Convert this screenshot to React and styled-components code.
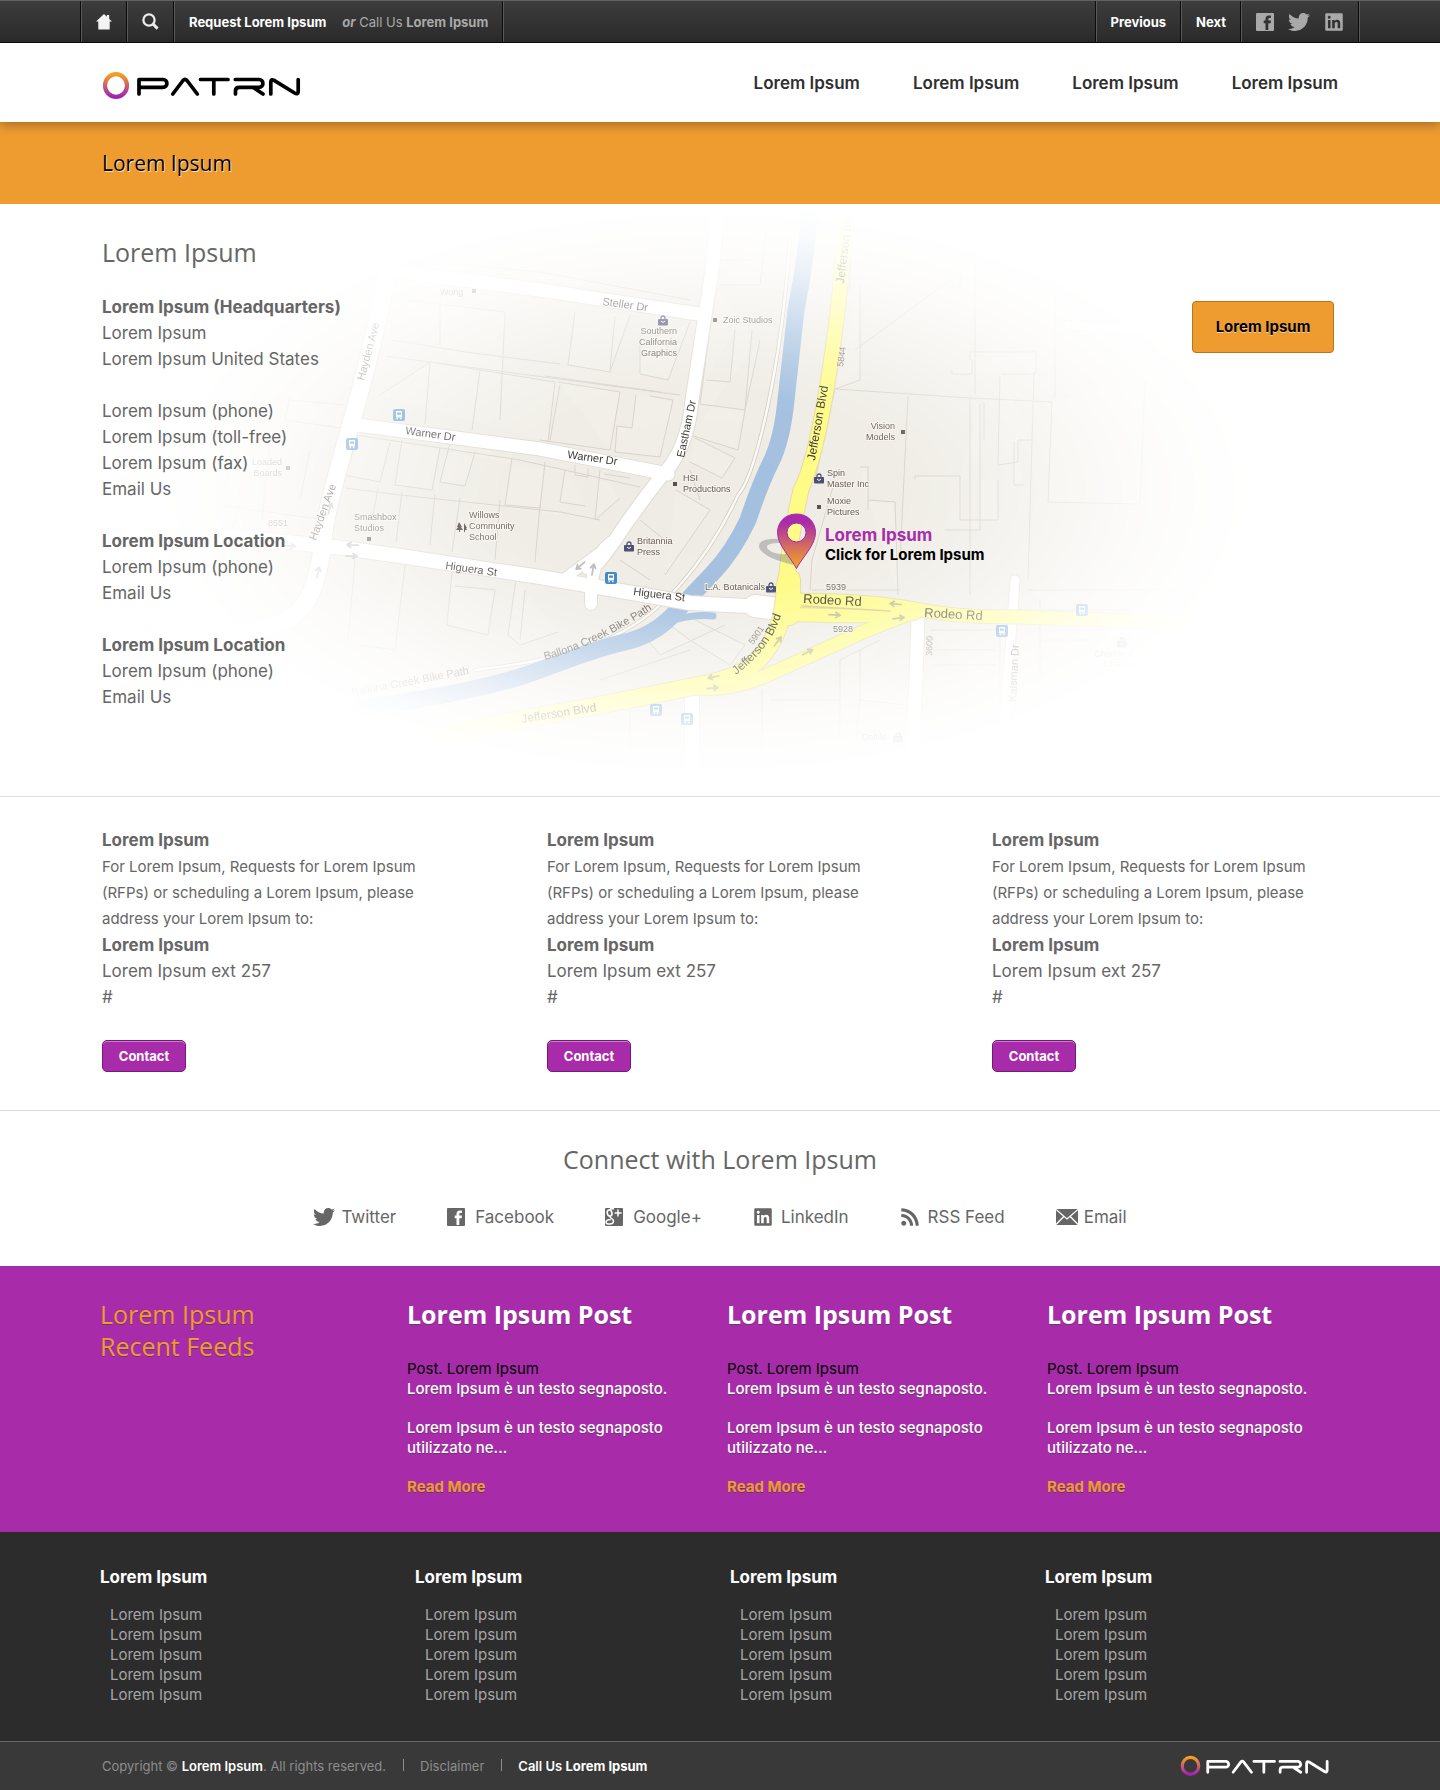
import React from "react";
import styled, { createGlobalStyle } from "styled-components";
import { FaTwitter, FaLinkedin, FaRss } from "react-icons/fa";

const color = {
  orange: "#ee9b30",
  purple: "#a82caa",
  text: "#666666",
  dark: "#2c2c2c",
  line: "#dddddd",
};
const body = '"Inter", "Liberation Sans", sans-serif';
const display = '"Open Sans", "Noto Sans", sans-serif';

const GlobalStyle = createGlobalStyle`
  *, *::before, *::after { box-sizing: border-box; }
  body {
    margin: 0;
    background: #ffffff;
    color: ${color.text};
    font-family: ${body};
    font-size: 17px;
    line-height: 26px;
  }
  a { color: inherit; text-decoration: none; }
  h1, h2, h3, p, ul, address { margin: 0; padding: 0; font-style: normal; }
  ul { list-style: none; }
`;

const Wrap = styled.div`
  width: 100%;
  max-width: 1280px;
  margin: 0 auto;
  padding: 0 ${(p) => (p.$flush ? 0 : 22)}px;
`;

/* ---------- Top bar ---------- */
const TopBar = styled.div`
  height: 43px;
  border-top: 1px solid #626262;
  border-bottom: 1px solid #0c0c0c;
  background: linear-gradient(#3c3c3c, #2b2b2b);
  color: #ffffff;
  font-size: 13px;
  line-height: 18px;
`;
const TopRow = styled(Wrap)`
  display: flex;
  justify-content: space-between;
  height: 100%;
`;
const CellGroup = styled.div`
  display: flex;
  border-left: 1px solid #0c0c0c;
  border-right: 1px solid #5a5a5a;
`;
const Cell = styled.div`
  display: flex;
  align-items: center;
  gap: ${(p) => p.$gap || 0}px;
  padding: 0 14px;
  border-left: 1px solid #5a5a5a;
  border-right: 1px solid #0c0c0c;
  font-weight: 700;
`;
const IconLink = styled.a`
  display: flex;
  color: ${(p) => p.$color || "inherit"};
`;
const CallUs = styled.span`
  color: #a9a9a9;
  font-weight: 400;
`;

/* ---------- Header ---------- */
const Header = styled.header`
  position: relative;
  background: #ffffff;
  box-shadow: 0 3px 10px rgba(0, 0, 0, 0.3);
`;
const HeaderRow = styled(Wrap)`
  display: flex;
  align-items: center;
  justify-content: space-between;
  height: 79px;
`;
const LogoLink = styled.a`
  display: flex;
  padding-top: ${(p) => p.$top || 0}px;
  padding-right: ${(p) => p.$right || 0}px;
`;
const Nav = styled.nav`
  display: flex;
  gap: 53px;
  color: #2f2f2f;
  font-weight: 600;
`;

const Banner = styled.div`
  padding: 28px 0;
  background: ${color.orange};
`;
const BannerTitle = styled.h1`
  color: #000000;
  font: 400 21px/26px ${display};
  text-shadow: 1px 1px 0 rgba(255, 255, 255, 0.7);
`;

/* ---------- Map section ---------- */
const Hero = styled.section`
  position: relative;
  overflow: hidden;
  border-bottom: 1px solid ${color.line};
`;
const MapCanvas = styled.div`
  position: absolute;
  top: 0;
  left: 50%;
  width: 1440px;
  height: 592px;
  margin-left: -720px;
`;
const Marker = styled.a`
  position: absolute;
  top: 309px;
  left: 756px;
  display: flex;
  gap: 7px;
`;
const MarkerText = styled.span`
  display: flex;
  flex-direction: column;
  padding-top: 12px;
  color: #000000;
  font-size: 15px;
  font-weight: 700;
  line-height: 20px;
`;
const MarkerTitle = styled.span`
  color: ${color.purple};
  font-size: 17px;
`;
const HeroRow = styled(Wrap)`
  position: relative;
  display: flex;
  justify-content: space-between;
  align-items: flex-start;
  padding-top: 32px;
  padding-bottom: 86px;
  pointer-events: none;
  a, button { pointer-events: auto; }
`;
const Title = styled.h2`
  color: ${(p) => p.$color || color.text};
  font: ${(p) => (p.$bold ? 700 : 400)} 25px/32px ${display};
  text-shadow: ${(p) => (p.$shadow ? "0 1px 0 rgba(60, 60, 60, 0.6)" : "none")};
`;
const Location = styled.address`
  display: flex;
  flex-direction: column;
  align-items: flex-start;
  margin-top: 26px;
`;
const HeroButton = styled.button`
  width: 142px;
  height: 52px;
  margin: 65px 4px 0 0;
  border: 1px solid #bf7317;
  border-radius: 4px;
  background: ${color.orange};
  color: #000000;
  font: 700 15px/20px ${body};
  text-shadow: 0 1px 0 rgba(255, 255, 255, 0.5);
`;

/* ---------- Department contacts ---------- */
const Band = styled.section`
  border-bottom: 1px solid ${color.line};
`;
const ContactGrid = styled(Wrap)`
  display: grid;
  grid-template-columns: repeat(3, minmax(0, 320px));
  column-gap: 125px;
  padding-top: 30px;
  padding-bottom: 38px;
`;
const ContactNote = styled.p`
  margin-top: 1px;
  font-size: 15px;
`;
const ContactButton = styled.button`
  display: block;
  width: 84px;
  height: 32px;
  margin-top: 30px;
  border: 1px solid #78177a;
  border-radius: 5px;
  background: ${color.purple};
  box-shadow: inset 0 1px 0 rgba(255, 255, 255, 0.4);
  color: #ffffff;
  font: 700 13px/18px ${body};
`;

/* ---------- Connect ---------- */
const Connect = styled.section`
  padding: 32px 0 36px;
  text-align: center;
`;
const SocialRow = styled.ul`
  display: flex;
  justify-content: center;
  gap: 51px;
  margin-top: 29px;
`;
const SocialLink = styled.a`
  display: flex;
  align-items: center;
`;
const SocialIcon = styled.span`
  display: flex;
  width: 28px;
`;

/* ---------- Feeds ---------- */
const Feeds = styled.section`
  background: ${color.purple};
`;
const FeedRow = styled(Wrap)`
  display: grid;
  grid-template-columns: 307px 320px 320px minmax(0, 1fr);
  padding: 32px 0 35px 20px;
`;
const FeedText = styled.div`
  padding-top: 29px;
  padding-right: 40px;
  color: #ffffff;
  font-size: 15px;
  font-weight: 500;
  line-height: 20px;
  text-shadow: 0 1px 0 rgba(60, 60, 60, 0.6);
`;
const FeedMeta = styled.p`
  color: #000000;
  font-weight: 400;
  text-shadow: none;
`;
const FeedBody = styled.p`
  margin-bottom: 19px;
`;
const ReadMore = styled.a`
  color: ${color.orange};
  font-weight: 700;
`;

/* ---------- Footer ---------- */
const Footer = styled.footer`
  background: ${color.dark};
`;
const FooterGrid = styled(Wrap)`
  display: grid;
  grid-template-columns: repeat(4, minmax(0, 315px));
  padding: 32px 0 36px 20px;
`;
const FooterTitle = styled.h3`
  color: #ffffff;
  font-size: 17px;
  font-weight: 700;
  line-height: 26px;
`;
const FooterList = styled.ul`
  margin-top: 15px;
  padding-left: 10px;
  color: #a6a6a6;
  font-size: 15px;
  line-height: 20px;
`;
const Legal = styled.div`
  border-top: 1px solid #666666;
  background: #393939;
  color: #8e8e8e;
  font-size: 13px;
  line-height: 18px;
`;
const LegalRow = styled(Wrap)`
  display: flex;
  align-items: center;
  justify-content: space-between;
  height: 48px;
`;
const LegalItems = styled.div`
  display: flex;
  align-items: center;
`;
const LegalItem = styled.span`
  & + & {
    margin-left: 17px;
    padding-left: 17px;
    background: linear-gradient(#8e8e8e, #8e8e8e) 0 2px / 1px 12px no-repeat;
  }
`;
const Bright = styled.span`
  color: #ffffff;
  font-weight: ${(p) => p.$weight || 600};
`;

/* ---------- Drawings ---------- */
function Logo({ width, ink, id }) {
  return (
    <svg width={width} viewBox="102 71 200 29" role="img" aria-label="PATRN">
      <defs>
        <linearGradient id={id} x1="0" y1="0" x2="0" y2="1">
          <stop offset="0" stopColor="#f5a020" />
          <stop offset="1" stopColor="#a321b6" />
        </linearGradient>
      </defs>
      <ellipse cx="116" cy="85.5" rx="11" ry="11.4" fill="none" stroke={`url(#${id})`} strokeWidth="4.2" />
      <g fill="none" stroke={ink} strokeWidth="3.7" strokeLinecap="round" strokeLinejoin="round">
        <path d="M139 94V79.500H163a3.900 3.900 0 0 1 0 7.800H141" />
        <path d="M172.800 94L183 80.500q2-2.400 4 0L197.300 94" />
        <path d="M200.500 79.500H228M213.800 79.500V94" />
        <path d="M235.300 79.500H259a3.900 3.900 0 0 1 0 7.800H239.500q-4 0-4 3.500V94M254 88L263 94" />
        <path d="M270.800 94V82q0-3.500 3.300-1.600L294.600 93q3.600 2 3.600-1.600V79.500" />
      </g>
    </svg>
  );
}

const HomeIcon = () => (
  <svg width="16" height="16" viewBox="0 0 16 16" aria-hidden="true">
    <path d="M8 0L0 7.600h2.300V15.500h11.400V7.600H16L13.200 5V1h-2.300v1.800z" fill="#f4f4f4" />
  </svg>
);
const SearchIcon = () => (
  <svg width="17" height="17" viewBox="0 0 17 17" fill="none" stroke="#ececec" aria-hidden="true">
    <circle cx="7" cy="7" r="5.600" strokeWidth="2.300" />
    <path d="M11 11l4.600 4.600" strokeWidth="3" />
  </svg>
);
const FacebookIcon = ({ hole = "#fff" }) => (
  <svg width="18" height="18" viewBox="0 0 18 18" aria-hidden="true">
    <rect width="18" height="18" rx="1" fill="currentColor" />
    <path d="M9.500 17V10.200H7.700V7.600h1.800V6c0-2.400 1.200-3.600 3.300-3.600h2.100V5h-1.500c-.9 0-1.100.4-1.100 1.200v1.400H15l-.3 2.600h-2.400V17z" fill={hole} />
  </svg>
);
const GoogleIcon = () => (
  <svg width="18" height="18" viewBox="0 0 18 18" aria-hidden="true">
    <rect width="18" height="18" rx="1" fill="currentColor" />
    <g fill="none" stroke="#fff">
      <path d="M13 1.500v7M9.600 5h7" strokeWidth="1.500" />
      <ellipse cx="4.600" cy="5" rx="2.300" ry="3.100" strokeWidth="1.600" transform="rotate(-14 4.600 5)" />
      <path d="M5 .8h4M5.600 8c-2 1.500 2.900 2.600 2.900 5 0 4-7.500 3.800-7.500 1.300 0-2 2.500-2.600 4.700-2.700" strokeWidth="1.500" />
    </g>
  </svg>
);
const EmailIcon = () => (
  <svg width="22" height="16" viewBox="0 0 22 16" aria-hidden="true">
    <rect width="22" height="16" fill="currentColor" />
    <path d="M0 .5L11 10 22 .5M0 15.500l7.800-8M22 15.500l-7.800-8" fill="none" stroke="#fff" strokeWidth="1.300" />
  </svg>
);
const PinIcon = () => (
  <svg width="62" height="58" viewBox="0 0 62 58" aria-hidden="true">
    <defs>
      <linearGradient id="pin" x1="0" y1="0" x2="0" y2="1">
        <stop offset="0.15" stopColor="#a92bab" />
        <stop offset="0.9" stopColor="#ef9a2c" />
      </linearGradient>
    </defs>
    <path d="M24 26C10 25 3 28 3 33c0 7 14 14 34 19l8-18zM24 30c5 0 8 3 8 7 0 3-3 5-8 4-7-1-13-4-13-7s5-4 13-4z" fill="#777" fillOpacity="0.4" fillRule="evenodd" />
    <path d="M40.500 1C29.500 1 21.500 9 21.500 19.500c0 13 13.500 25 19 36 5.500-11 19-23 19-36C59.500 9 51.500 1 40.500 1zm0 9a9.500 9.500 0 1 1 0 19 9.500 9.500 0 0 1 0-19z" fill="url(#pin)" fillRule="evenodd" stroke="#a92bab" />
  </svg>
);

const roads = [
  ["M388 270Q375 340 350 427T323 540Q318 590 300 610T230 632", 17],
  ["M350 424L540 449 668 474", 13],
  ["M385 270L540 290 705 315", 13],
  ["M718 200Q715 260 705 315L692 400Q688 450 660 478Q635 510 615 540T588 568", 13],
  ["M610 543Q590 560 591 604", 12],
  ["M610 545L565 578", 10],
  ["M230 536L343 548 400 556 540 577 690 603 780 608", 14],
  ["M755 606L785 610", 22],
  ["M918 618Q916 690 912 752", 13],
  ["M1015 580L1010 650 1004 730", 9],
  ["M692 695V775", 14],
  ["M1068 325L1160 332", 8],
];

const rivers = [
  ["M810 200Q808 250 796 310L786 400Q782 440 771 462T748 520Q733 552 712 574T672 616Q652 636 625 642T540 670T360 708", 17],
  ["M668 622Q690 614 713 616", 7],
];

const yellow = [
  ["M847 200Q842 290 829 374T801 490", 14],
  ["M801 490Q788 545 785 600", 15],
  ["M785 585Q785 625 765 652T695 686Q610 704 540 716T400 744", 17],
  ["M789 580V614", 22],
  ["M785 600Q870 600 915 609T1020 617L1220 624", 13],
  ["M785 614Q860 618 915 613", 13],
  ["M912 613Q880 624 845 640T770 674T695 688", 13],
];

const parcels = [
  "M388 258L540 272 690 300M405 300L505 312 500 420M440 300V345M392 340L465 352 560 364M385 356L680 395M380 395L430 362 555 382 548 442M430 362L425 424M480 370L472 430M545 376L660 392",
  "M575 312L568 365 610 372 630 315M615 316L610 370M640 345V374L668 380 690 322M560 385L550 440M558 382L620 392 610 450M636 395L632 428 617 426 615 452 660 457 673 400 650 396M540 440L610 450",
  "M355 435L520 460 640 487M358 437L345 475 380 482 390 442M402 440L395 485 432 490 440 448M450 443L440 482 465 486 475 452M512 458L505 505 540 508 545 462M345 488L400 495 560 512 600 520M378 488L372 520M402 492L396 542M435 494L430 545M460 498L452 552M500 500L495 560M540 505L535 562M565 470L560 502 585 506M600 470L595 520 620 498M575 465V475L588 477V468M604 474L630 478",
  "M355 560L348 640M405 565L395 650 360 645M452 572L447 625 488 635 495 590 455 586M516 580L508 635 520 645 558 632M525 590L520 640M325 520L220 505M240 505L222 560M290 395L285 420 355 430M290 400L345 405M232 445L225 490M310 450L300 500M270 440L262 520",
  "M720 285L760 285 768 215M720 260H752M715 290L700 404 745 410 752 330M735 330L730 382 706 380M760 340L745 410 738 450 690 435M695 438L735 458 722 478 690 462M700 500L690 470M676 490L710 510 665 575M640 520L665 540M620 560L650 580",
  "M835 389L970 398 1053 402M835 389L815 480M908 396L900 560M970 398V595M980 404V530H945M860 467H868V510M915 480V476H960V520H998V480M868 500L895 502 898 595M812 590L900 590M1002 374H1036V352H970V360H972V374H952V370M984 402V440M1000 376L998 465 1018 462V440H1034M1034 372L1028 580M1052 402L1048 502 1140 504 1145 380M1014 441V485H1024M975 240V394M1055 270V398M950 280L855 350",
  "M695 620L745 645 730 665 690 640 670 625M648 640L660 655 725 625M600 680L690 650M630 700V780M762 690V780M860 650V700L905 705M860 700L855 750M930 630H1000V720M935 650H995M935 665H995M1028 590H1180V700M1040 600V690M1050 610H1130V640H1045M1055 630H1110M770 700H840M880 640L840 660V740M790 580V540",
  "M835 480L812 560 810 590M860 285V380L835 389M850 220V290M960 210V290",
];

const busStops = [[399, 415, 0.9], [352, 444, 0.9], [611, 578, 1], [1002, 631, 0.9], [1082, 610, 0.9], [656, 710, 0.9], [687, 719, 0.9]];
const shops = [[663, 321], [819, 479], [629, 547], [771, 588], [1122, 643], [898, 738]];
const dots = [[715, 320], [675, 484], [903, 432], [819, 507], [369, 539], [474, 291], [288, 468]];

const places = [
  ["Zoic Studios", 723, 323], ["HSI", 683, 481], ["Productions", 683, 492],
  ["Spin", 827, 476], ["Master Inc", 827, 487], ["Moxie", 827, 504], ["Pictures", 827, 515],
  ["Britannia", 637, 544], ["Press", 637, 555],
  ["Willows", 469, 518], ["Community", 469, 529], ["School", 469, 540],
  ["Smashbox", 354, 520], ["Studios", 354, 531],
  ["Southern", 677, 334, "end"], ["California", 677, 345, "end"], ["Graphics", 677, 356, "end"],
  ["Vision", 895, 429, "end"], ["Models", 895, 440, "end"],
  ["L.A. Botanicals", 765, 590, "end"], ["5939", 826, 590], ["5928", 833, 632],
  ["8551", 268, 526], ["Wong", 440, 295], ["Loaded", 282, 465, "end"], ["Boards", 282, 476, "end"],
  ["Daltile", 862, 740], ["Charlon &", 1094, 657], ["Charlon", 1104, 667],
];

const streets = [
  ["Steller Dr", 602, 305, 8, 11], ["Warner Dr", 405, 434, 8, 11], ["Warner Dr", 567, 458, 8, 11],
  ["Higuera St", 445, 569, 8, 11], ["Higuera St", 633, 595, 7, 11],
  ["Eastham Dr", 684, 458, -78, 11], ["Hayden Ave", 364, 381, -75, 11], ["Hayden Ave", 316, 541, -70, 11],
  ["Jefferson Blvd", 815, 461, -80, 12], ["Jefferson Blvd", 844, 284, -83, 12],
  ["Jefferson Blvd", 522, 723, -9, 12],
  ["Rodeo Rd", 803, 603, 3, 13], ["Rodeo Rd", 924, 617, 3, 13],
  ["Kalsman Dr", 1016, 702, -87, 11], ["5844", 843, 367, -82, 9], ["3600", 932, 656, -88, 9],
  ["5901", 753, 645, -55, 9],
];

const arrows = [
  [352, 545, 182], [352, 556, 2], [330, 508, -74], [318, 572, -76], [580, 566, 140], [593, 569, -80],
  [895, 604, 186], [835, 615, 3], [899, 618, -8], [808, 652, -28], [778, 641, -52],
  [713, 677, 170], [713, 688, -5], [290, 546, 3],
];

function MapDrawing() {
  return (
    <svg width="1440" height="592" viewBox="0 204 1440 592" aria-hidden="true">
      <defs>
        <radialGradient id="fade" gradientUnits="userSpaceOnUse" cx="0" cy="0" r="1" gradientTransform="translate(705 492) scale(550 288)">
          <stop offset="0" stopColor="#fff" />
          <stop offset="0.35" stopColor="#fff" stopOpacity="0.96" />
          <stop offset="0.5" stopColor="#fff" stopOpacity="0.74" />
          <stop offset="0.65" stopColor="#fff" stopOpacity="0.46" />
          <stop offset="0.8" stopColor="#fff" stopOpacity="0.19" />
          <stop offset="0.9" stopColor="#fff" stopOpacity="0.07" />
          <stop offset="1" stopColor="#fff" stopOpacity="0" />
        </radialGradient>
        <mask id="mapMask" maskUnits="userSpaceOnUse" x="0" y="204" width="1440" height="592">
          <rect x="0" y="204" width="1440" height="592" fill="url(#fade)" />
        </mask>
        <path id="bikeA" d="M545 660Q600 645 660 604" />
        <path id="bikeB" d="M352 696L490 670" />
        <path id="jeffCurve" d="M736 675Q775 645 783 608" />
      </defs>
      <g mask="url(#mapMask)" fontFamily="'Liberation Sans', Arial, sans-serif">
        <rect x="100" y="204" width="1240" height="592" fill="#efece5" />
        <g fill="#f4f1ea" fillOpacity="0.3" stroke="#d8d3ca" strokeWidth="1">
          {parcels.map((d) => <path key={d} d={d} />)}
        </g>
        <g fill="none" strokeLinecap="round" strokeLinejoin="round">
          <path d="M790 238Q784 330 768 405T738 495Q715 545 680 585T600 642Q560 660 475 670" stroke="#cfc9bd" strokeWidth="4" />
          <path d="M790 238Q784 330 768 405T738 495Q715 545 680 585T600 642Q560 660 475 670" stroke="#fbfaf6" strokeWidth="2.500" />
          {rivers.map(([d, w]) => <path key={d} d={d} stroke="#a3bfdf" strokeWidth={w} />)}
          {roads.map(([d, w]) => <path key={d} d={d} stroke="#e0dbd2" strokeWidth={w + 2} />)}
          {roads.map(([d, w]) => <path key={d} d={d} stroke="#ffffff" strokeWidth={w} />)}
          {yellow.map(([d, w]) => <path key={d} d={d} stroke="#e3dba6" strokeWidth={w + 2} />)}
          {yellow.map(([d, w]) => <path key={d} d={d} stroke="#fefb84" strokeWidth={w} />)}
          <path d="M802 606L890 611" stroke="#d9c98a" strokeWidth="1.500" />
          <g stroke="#8f8f8f" strokeOpacity="0.6" strokeWidth="1.800">
            {arrows.map(([x, y, r]) => (
              <path key={`${x}-${y}`} d="M-6 0H5M1-2.500L5 0 1 2.500" transform={`translate(${x} ${y}) rotate(${r})`} />
            ))}
          </g>
        </g>
        {busStops.map(([x, y, o]) => (
          <g key={`${x}-${y}`} transform={`translate(${x - 6} ${y - 6})`} opacity={o}>
            <rect width="12" height="12" rx="2" fill="#3d85c6" />
            <path d="M3 2h6v6.500H3zM3.500 9h1.500v1.200H3.500zM7 9h1.500v1.200H7z" fill="#fff" />
            <path d="M4 3.500h4v2.200H4z" fill="#3d85c6" />
          </g>
        ))}
        {shops.map(([x, y]) => (
          <g key={`${x}-${y}`} transform={`translate(${x - 5} ${y - 6})`}>
            <path d="M3 4.500V3a2 2 0 0 1 4 0v1.500" fill="none" stroke="#4b4b70" strokeWidth="1.300" />
            <rect y="4" width="10" height="6.500" rx="1" fill="#4b4b70" />
            <path d="M3 6q2 3 4 0" fill="none" stroke="#fff" />
          </g>
        ))}
        {dots.map(([x, y]) => <rect key={`${x}-${y}`} x={x - 2} y={y - 2} width="4" height="4" fill="#5b5048" />)}
        <path d="M459 522l3 5-1 0 2 3h-3v2h-1v-2h-3l2-3h-1zM464 523l3 5-1 0 1 2h-2v2h-1v-3z" fill="#55483c" />
        <g fill="#655b53" fontSize="9" stroke="#f7f4ee" strokeWidth="2" paintOrder="stroke">
          {places.map(([t, x, y, anchor]) => (
            <text key={`${t}-${y}`} x={x} y={y} textAnchor={anchor || "start"}>{t}</text>
          ))}
        </g>
        <g fill="#37322c">
          {streets.map(([t, x, y, r, size]) => (
            <text key={`${t}-${x}`} transform={`translate(${x} ${y}) rotate(${r})`} fontSize={size} fill={size < 10 ? "#80776d" : undefined}>{t}</text>
          ))}
          <text fontSize="12"><textPath href="#jeffCurve">Jefferson Blvd</textPath></text>
          <text fontSize="11" fill="#6d665c"><textPath href="#bikeA">Ballona Creek Bike Path</textPath></text>
          <text fontSize="11" fill="#6d665c"><textPath href="#bikeB">Ballona Creek Bike Path</textPath></text>
        </g>
      </g>
    </svg>
  );
}

/* ---------- Content ---------- */
const social = [
  ["Twitter", <FaTwitter size={22} />],
  ["Facebook", <FacebookIcon />],
  ["Google+", <GoogleIcon />],
  ["LinkedIn", <FaLinkedin size={20} />],
  ["RSS Feed", <FaRss size={20} />],
  ["Email", <EmailIcon />],
];
const three = [0, 1, 2];
const four = [0, 1, 2, 3];
const five = [0, 1, 2, 3, 4];

export default function App() {
  return (
    <>
      <GlobalStyle />
      <TopBar>
        <TopRow $flush>
          <CellGroup>
            <Cell><IconLink href="#" aria-label="Home"><HomeIcon /></IconLink></Cell>
            <Cell><IconLink href="#" aria-label="Search"><SearchIcon /></IconLink></Cell>
            <Cell $gap={16}>
              <a href="#">Request Lorem Ipsum</a>
              <CallUs><b><i>or</i></b> Call Us <b>Lorem Ipsum</b></CallUs>
            </Cell>
          </CellGroup>
          <CellGroup>
            <Cell><a href="#">Previous</a></Cell>
            <Cell><a href="#">Next</a></Cell>
            <Cell $gap={14}>
              <IconLink $color="#a9a9a9" href="#" aria-label="Facebook"><FacebookIcon hole="#333" /></IconLink>
              <IconLink $color="#a9a9a9" href="#" aria-label="Twitter"><FaTwitter size={22} /></IconLink>
              <IconLink $color="#a9a9a9" href="#" aria-label="LinkedIn"><FaLinkedin size={20} /></IconLink>
            </Cell>
          </CellGroup>
        </TopRow>
      </TopBar>

      <Header>
        <HeaderRow>
          <LogoLink href="#" $top={6}><Logo width={200} ink="#000" id="logoTop" /></LogoLink>
          <Nav>
            {four.map((i) => <a key={i} href="#">Lorem Ipsum</a>)}
          </Nav>
        </HeaderRow>
      </Header>

      <Banner><Wrap><BannerTitle>Lorem Ipsum</BannerTitle></Wrap></Banner>

      <main>
        <Hero>
          <MapCanvas>
            <MapDrawing />
            <Marker href="#">
              <PinIcon />
              <MarkerText>
                <MarkerTitle>Lorem Ipsum</MarkerTitle>
                Click for Lorem Ipsum
              </MarkerText>
            </Marker>
          </MapCanvas>
          <HeroRow>
            <div>
              <Title>Lorem Ipsum</Title>
              <Location>
                <b>Lorem Ipsum (Headquarters)</b>
                <span>Lorem Ipsum</span>
                <span>Lorem Ipsum United States</span>
              </Location>
              <Location>
                <span>Lorem Ipsum (phone)</span>
                <span>Lorem Ipsum (toll-free)</span>
                <span>Lorem Ipsum (fax)</span>
                <a href="#">Email Us</a>
              </Location>
              {[0, 1].map((i) => (
                <Location key={i}>
                  <b>Lorem Ipsum Location</b>
                  <span>Lorem Ipsum (phone)</span>
                  <a href="#">Email Us</a>
                </Location>
              ))}
            </div>
            <HeroButton type="button">Lorem Ipsum</HeroButton>
          </HeroRow>
        </Hero>

        <Band>
          <ContactGrid>
            {three.map((i) => (
              <div key={i}>
                <b>Lorem Ipsum</b>
                <ContactNote>
                  For Lorem Ipsum, Requests for Lorem Ipsum (RFPs) or scheduling a Lorem Ipsum, please address your Lorem Ipsum to:
                </ContactNote>
                <p><b>Lorem Ipsum</b></p>
                <p>Lorem Ipsum ext 257</p>
                <a href="#">#</a>
                <ContactButton type="button">Contact</ContactButton>
              </div>
            ))}
          </ContactGrid>
        </Band>

        <Connect>
          <Title>Connect with Lorem Ipsum</Title>
          <SocialRow>
            {social.map(([name, icon]) => (
              <li key={name}>
                <SocialLink href="#"><SocialIcon>{icon}</SocialIcon>{name}</SocialLink>
              </li>
            ))}
          </SocialRow>
        </Connect>

        <Feeds>
          <FeedRow>
            <Title $color={color.orange} $shadow>Lorem Ipsum<br />Recent Feeds</Title>
            {three.map((i) => (
              <article key={i}>
                <Title as="h3" $bold $shadow $color="#fff">Lorem Ipsum Post</Title>
                <FeedText>
                  <FeedMeta>Post. Lorem Ipsum</FeedMeta>
                  <FeedBody>Lorem Ipsum è un testo segnaposto.</FeedBody>
                  <FeedBody>Lorem Ipsum è un testo segnaposto utilizzato ne...</FeedBody>
                  <ReadMore href="#">Read More</ReadMore>
                </FeedText>
              </article>
            ))}
          </FeedRow>
        </Feeds>
      </main>

      <Footer>
        <FooterGrid>
          {four.map((i) => (
            <div key={i}>
              <FooterTitle>Lorem Ipsum</FooterTitle>
              <FooterList>
                {five.map((j) => <li key={j}><a href="#">Lorem Ipsum</a></li>)}
              </FooterList>
            </div>
          ))}
        </FooterGrid>
        <Legal>
          <LegalRow>
            <LegalItems>
              <LegalItem>Copyright © <Bright>Lorem Ipsum</Bright>. All rights reserved.</LegalItem>
              <LegalItem><a href="#">Disclaimer</a></LegalItem>
              <LegalItem><Bright>Call Us <Bright $weight={700}>Lorem Ipsum</Bright></Bright></LegalItem>
            </LegalItems>
            <LogoLink href="#" $right={8}><Logo width={150} ink="#fff" id="logoBottom" /></LogoLink>
          </LegalRow>
        </Legal>
      </Footer>
    </>
  );
}
